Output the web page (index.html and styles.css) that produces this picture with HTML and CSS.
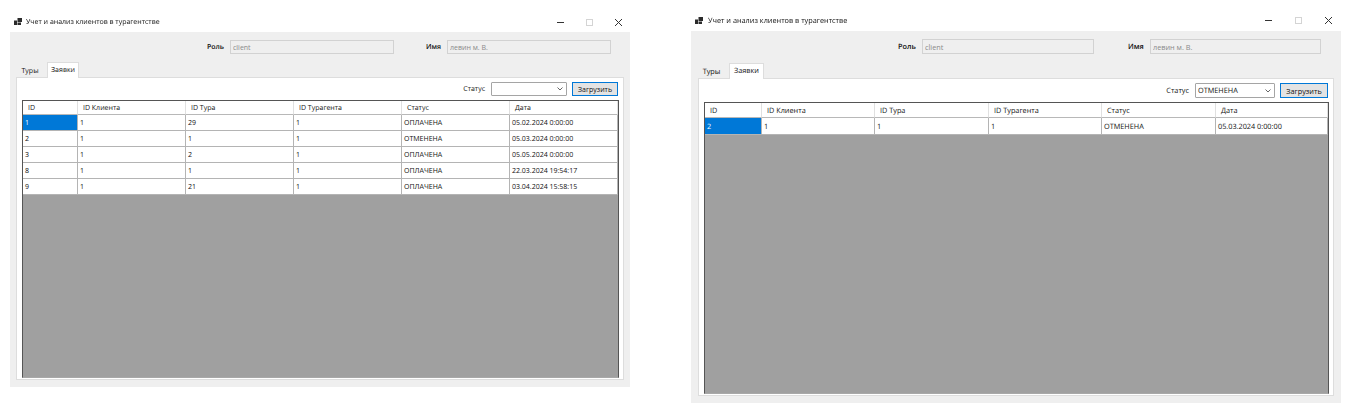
FILE: index.html
```html
<!DOCTYPE html>
<html>
<head>
    <title>Учет и анализ клиентов в турагентстве</title>
    <link rel="stylesheet" href="styles.css">
</head>
<body>

<section class="window window-small">
    <div class="titlebar">
        <svg class="app-icon" width="8" height="8" viewBox="0 0 8 8"><path d="M0 2.500h3v4.500H0zM3.500 0h4.500v4H3.500zM3.500 4.500h3.500v2.500H3.500z" fill="#2b2b2b"/></svg>
        <span class="title">Учет и анализ клиентов в турагентстве</span>
        <div class="controls">
            <svg class="control" width="9" height="9" viewBox="0 0 9 9"><path d="M1 4.500h7" stroke="#333"/></svg>
            <svg class="control" width="9" height="9" viewBox="0 0 9 9"><rect x="1.500" y="1.500" width="6" height="6" fill="none" stroke="#d4d4d4"/></svg>
            <svg class="control" width="9" height="9" viewBox="0 0 9 9"><path d="M1 1l7 7M8 1l-7 7" stroke="#333"/></svg>
        </div>
    </div>
    <div class="client">
        <div class="user-row">
            <label class="user-label label-role">Роль</label>
            <input class="user-input" type="text" value="client" disabled>
            <label class="user-label label-name">Имя</label>
            <input class="user-input" type="text" value="левин м. В." disabled>
        </div>
        <div class="tabs">
            <span class="tab">Туры</span>
            <span class="tab tab-active">Заявки</span>
        </div>
        <div class="page">
            <div class="filter-row">
                <label class="filter-label">Статус</label>
                <div class="combo"><span class="combo-value"></span><svg width="6" height="4" viewBox="0 0 6 4"><path d="M.5.500L3 3 5.500.500" fill="none" stroke="#666"/></svg></div>
                <button class="load-btn">Загрузить</button>
            </div>
            <div class="grid">
                <table>
                    <thead>
                        <tr><th class="col-id">ID</th><th class="col-client">ID Клиента</th><th class="col-tour">ID Тура</th><th class="col-agent">ID Турагента</th><th class="col-status">Статус</th><th class="col-date">Дата</th></tr>
                    </thead>
                    <tbody>
                        <tr><td class="selected">1</td><td>1</td><td>29</td><td>1</td><td>ОПЛАЧЕНА</td><td>05.02.2024 0:00:00</td></tr>
                        <tr><td>2</td><td>1</td><td>1</td><td>1</td><td>ОТМЕНЕНА</td><td>05.03.2024 0:00:00</td></tr>
                        <tr><td>3</td><td>1</td><td>2</td><td>1</td><td>ОПЛАЧЕНА</td><td>05.05.2024 0:00:00</td></tr>
                        <tr><td>8</td><td>1</td><td>1</td><td>1</td><td>ОПЛАЧЕНА</td><td>22.03.2024 19:54:17</td></tr>
                        <tr><td>9</td><td>1</td><td>21</td><td>1</td><td>ОПЛАЧЕНА</td><td>03.04.2024 15:58:15</td></tr>
                    </tbody>
                </table>
            </div>
        </div>
    </div>
</section>

<section class="window window-large">
    <div class="titlebar">
        <svg class="app-icon" width="8" height="8" viewBox="0 0 8 8"><path d="M0 2.500h3v4.500H0zM3.500 0h4.500v4H3.500zM3.500 4.500h3.500v2.500H3.500z" fill="#2b2b2b"/></svg>
        <span class="title">Учет и анализ клиентов в турагентстве</span>
        <div class="controls">
            <svg class="control" width="9" height="9" viewBox="0 0 9 9"><path d="M1 4.500h7" stroke="#333"/></svg>
            <svg class="control" width="9" height="9" viewBox="0 0 9 9"><rect x="1.500" y="1.500" width="6" height="6" fill="none" stroke="#d4d4d4"/></svg>
            <svg class="control" width="9" height="9" viewBox="0 0 9 9"><path d="M1 1l7 7M8 1l-7 7" stroke="#333"/></svg>
        </div>
    </div>
    <div class="client">
        <div class="user-row">
            <label class="user-label label-role">Роль</label>
            <input class="user-input" type="text" value="client" disabled>
            <label class="user-label label-name">Имя</label>
            <input class="user-input" type="text" value="левин м. В." disabled>
        </div>
        <div class="tabs">
            <span class="tab">Туры</span>
            <span class="tab tab-active">Заявки</span>
        </div>
        <div class="page">
            <div class="filter-row">
                <label class="filter-label">Статус</label>
                <div class="combo"><span class="combo-value">ОТМЕНЕНА</span><svg width="6" height="4" viewBox="0 0 6 4"><path d="M.5.500L3 3 5.500.500" fill="none" stroke="#666"/></svg></div>
                <button class="load-btn">Загрузить</button>
            </div>
            <div class="grid">
                <table>
                    <thead>
                        <tr><th class="col-id">ID</th><th class="col-client">ID Клиента</th><th class="col-tour">ID Тура</th><th class="col-agent">ID Турагента</th><th class="col-status">Статус</th><th class="col-date">Дата</th></tr>
                    </thead>
                    <tbody>
                        <tr><td class="selected">2</td><td>1</td><td>1</td><td>1</td><td>ОТМЕНЕНА</td><td>05.03.2024 0:00:00</td></tr>
                    </tbody>
                </table>
            </div>
        </div>
    </div>
</section>

</body>
</html>
```

FILE: styles.css
```css
* {
    box-sizing: border-box;
    margin: 0;
    padding: 0;
}
body {
    font-family: 'Open Sans', 'Noto Sans', sans-serif;
    color: #111;
    background-color: #FFFFFF;
    height: 410px;
    overflow: hidden;
    display: flex;
    align-items: flex-start;
    gap: 61px;
    padding-left: 10px;
    filter: blur(0.3px);
    text-rendering: geometricPrecision;
}
.window {
    display: flex;
    flex-direction: column;
}
.window-small {
    width: 620px;
    margin-top: 12px;
    font-size: 7px;
}
.window-large {
    width: 650px;
    margin-top: 10px;
    font-size: 7.3px;
}
.titlebar {
    height: 20px;
    display: flex;
    align-items: center;
    padding-left: 4px;
}
.window-large .titlebar {
    height: 21px;
}
.title {
    margin-left: 4px;
    padding-top: 1px;
}
.window-large .title {
    margin-left: 5px;
}
.controls {
    margin-left: auto;
    display: flex;
    padding-right: 7px;
    gap: 20px;
}
.window-large .controls {
    gap: 21px;
    padding-right: 8px;
}
.client {
    background-color: #EFEFEF;
    display: flex;
    flex-direction: column;
    padding: 0 6px 7px;
}
.window-small .client {
    height: 355px;
}
.window-large .client {
    height: 372px;
    padding: 0 7px 7px;
}

/* role and name */
.user-row {
    display: flex;
    align-items: center;
    height: 14px;
    margin-top: 8px;
}
.window-large .user-row {
    height: 15px;
}
.user-label {
    font-weight: 600;
}
.label-role {
    width: 18px;
}
.label-name {
    width: 15px;
}
.user-input {
    height: 100%;
    background-color: #EFEFEF;
    border: 1px solid #D2D2D2;
    font-family: inherit;
    font-size: inherit;
    color: #8a8a8a;
    padding-left: 2px;
    outline: none;
}
.window-small .user-input {
    width: 164px;
    margin-left: 5px;
}
.window-small .label-role {
    margin-left: 191px;
}
.window-small .label-name {
    margin-left: 32px;
}
.window-small .label-name + .user-input {
    margin-left: 6px;
}
.window-large .user-input {
    width: 172px;
    margin-left: 6px;
}
.window-large .label-role {
    margin-left: 200px;
}
.window-large .label-name {
    margin-left: 34px;
}
.window-large .label-name + .user-input {
    margin-left: 7px;
    width: 171px;
}

/* tabs */
.tabs {
    display: flex;
    align-items: flex-end;
    height: 23px;
    padding-left: 1px;
}
.window-large .tabs {
    height: 24px;
}
.tab {
    height: 12px;
    line-height: 13px;
    width: 26px;
    margin-right: 4px;
    text-align: center;
    background-color: #EFEFEF;
}
.tab-active {
    height: 16px;
    line-height: 15px;
    width: 32px;
    margin-right: 0;
    background-color: #FFFFFF;
    border: 1px solid #DDD;
    border-bottom: none;
    margin-bottom: -1px;
    position: relative;
}
.window-large .tab {
    width: 25px;
    margin-right: 5px;
}
.window-large .tab-active {
    width: 35px;
    margin-right: 0;
}

.page {
    flex: 1;
    background-color: #FFFFFF;
    border: 1px solid #DDD;
    display: flex;
    flex-direction: column;
    padding: 4px 4px 1px 5px;
}
.filter-row {
    display: flex;
    align-items: center;
    justify-content: flex-end;
    height: 14px;
    padding-right: 1px;
}
.window-large .filter-row {
    height: 15px;
}
.filter-label {
    margin-right: 6px;
}
.combo {
    height: 100%;
    border: 1px solid #A5A5A5;
    border-radius: 1px;
    background-color: #FFFFFF;
    display: flex;
    align-items: center;
    justify-content: space-between;
    padding: 0 3px 0 2px;
}
.window-small .combo {
    width: 76px;
}
.window-large .combo {
    width: 80px;
}
.load-btn {
    height: 100%;
    margin-left: 5px;
    background-color: #E3E3E3;
    border: 1px solid #0078D7;
    font-family: inherit;
    font-size: inherit;
    font-weight: 500;
    color: #111;
}
.window-small .load-btn {
    width: 46px;
}
.window-large .load-btn {
    width: 48px;
}

/* data grid */
.grid {
    flex: 1;
    margin-top: 4px;
    background-color: #A0A0A0;
    border: 1px solid #555;
    border-bottom-color: #A8A8A8;
    overflow: hidden;
}
table {
    border-collapse: separate;
    border-spacing: 0;
    table-layout: fixed;
    width: 100%;
    background-color: #FFFFFF;
}
th {
    font-weight: 400;
    text-align: left;
    height: 14px;
    padding: 2px 0 0 5px;
    border-right: 1px solid #E0E0E0;
    border-bottom: 1px solid #B8B8B8;
}
td {
    height: 16px;
    padding: 2px 0 0 2px;
    border-right: 1px solid #B4B4B4;
    border-bottom: 1px solid #B4B4B4;
}
.window-large td {
    height: 17px;
}
.window-large th {
    height: 15px;
}
td.selected {
    background-color: #0078D7;
    color: #FFFFFF;
}
.window-small .col-id { width: 55px; }
.window-small .col-client { width: 108px; }
.window-small .col-tour { width: 108px; }
.window-small .col-agent { width: 108px; }
.window-small .col-status { width: 108px; }
.window-large .col-id { width: 57px; }
.window-large .col-client { width: 113px; }
.window-large .col-tour { width: 114px; }
.window-large .col-agent { width: 113px; }
.window-large .col-status { width: 114px; }
```
